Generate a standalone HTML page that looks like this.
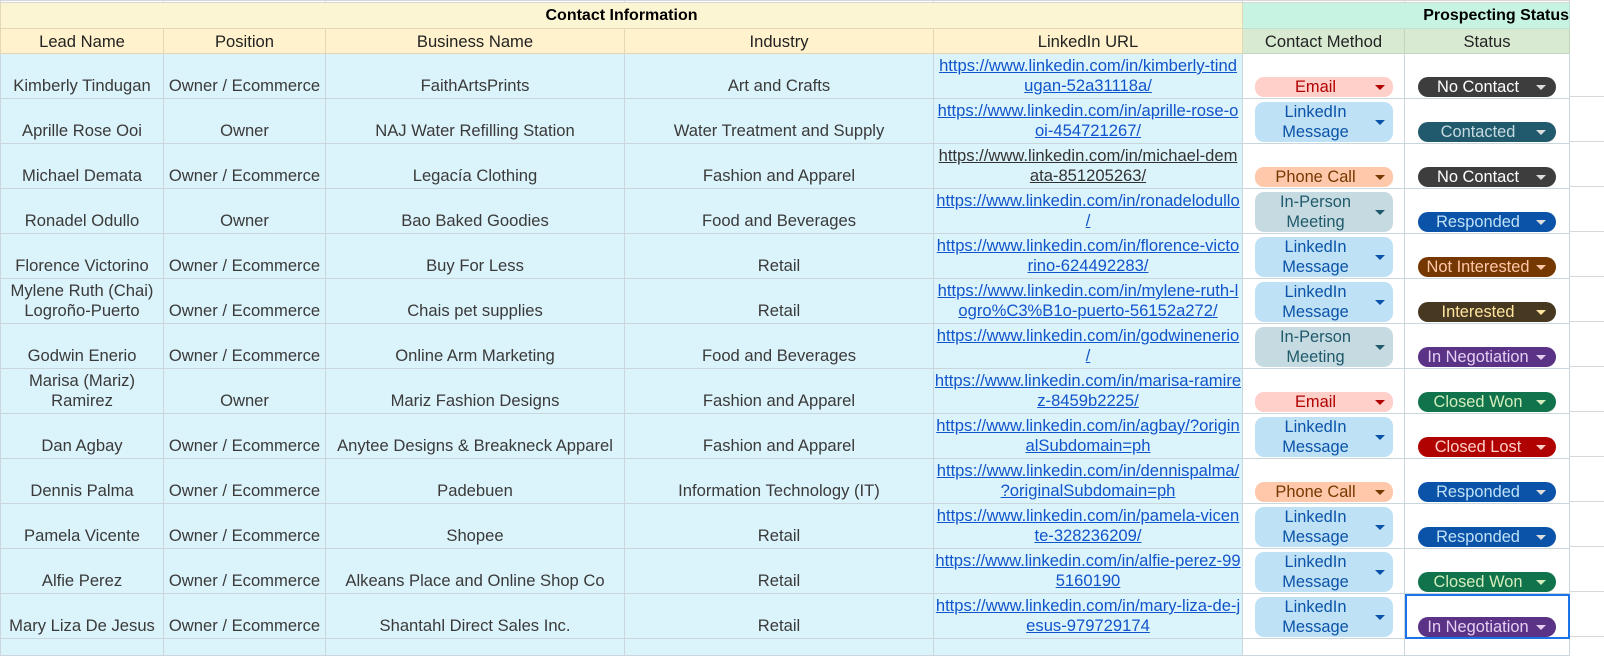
<!DOCTYPE html>
<html><head><meta charset="utf-8"><style>
body{margin:0;width:1604px;height:655px;overflow:hidden;background:#fff;font-family:"Liberation Sans",Arial,sans-serif;}
table{border-collapse:collapse;table-layout:fixed;position:absolute;left:0;top:0;width:1569px;}
td{border:1px solid #c9d6dc;padding:0 0 3px;text-align:center;vertical-align:bottom;font-size:16.6px;line-height:19.5px;color:#3a3a3a;overflow:hidden;white-space:nowrap;}
tr.r0 td{height:1px;padding:0;border-color:#d6d6d6;}
tr.h1 td{height:22px;font-weight:bold;color:#000;background:#fbf5d3;font-size:16px;padding:0 0 3px;border-color:#e2d9b4;}
tr.h1 td.ps{background:#c7f4e2;text-align:right;border-color:#bfe0d2;}
tr.h2 td{height:22px;background:#fff2cc;color:#222;padding:0 0 2px;border-color:#e2d9b4;}
tr.h2 td.g{background:#d9ead3;border-color:#c3d5bd;}
tr.d td{height:41px;background:#dbf3fa;}
tr.d td.w{background:#fff;padding:0 0 1px;}
tr.e td{height:16px;background:#dbf3fa;padding:0}
tr.e td.w{background:#fff}
a{color:#1155cc;text-decoration:underline;}
a.k{color:#333;}
.c{display:inline-block;position:relative;width:138px;border-radius:9px;text-align:center;box-sizing:border-box;padding-right:16px;font-size:16.4px;line-height:19.5px;vertical-align:bottom}
.c:after{content:"";position:absolute;right:8px;top:50%;margin-top:-2px;border-left:5px solid transparent;border-right:5px solid transparent;border-top:5px solid currentColor;}
.c.one{height:20px;line-height:20px}
.c.two{height:40px;padding-top:1px}
.em{background:#ffcfc9;color:#b10202}
.li{background:#bfe1f6;color:#0a53a8}
.ph{background:#ffc8aa;color:#753800}
.ip{background:#c6dbe1;color:#215a6c}
.s{display:inline-block;position:relative;width:138px;height:20px;line-height:20px;border-radius:10px;box-sizing:border-box;padding-right:18px;font-size:16.4px;}
.s:after{content:"";position:absolute;right:10px;top:8px;border-left:5px solid transparent;border-right:5px solid transparent;border-top:5px solid currentColor;}
.nc{background:#3d3d3d;color:#fff}.nc:after{border-top-color:#ddd}
.ct{background:#215a6c;color:#c6dbe1}.ct:after{border-top-color:#ddd}
.rs{background:#0a53a8;color:#bfe1f6}.rs:after{border-top-color:#ddd}
.ni{background:#753800;color:#ffc8aa}
.in{background:#473821;color:#ffe5a0}
.ng{background:#5a3286;color:#e6cff2}
.cw{background:#11734b;color:#d4edbc}
.cl{background:#b10202;color:#ffcfc9}
.sel{outline:2px solid #1a73e8;outline-offset:-2px}
.rest{position:absolute;left:1569px;top:52px;width:35px;height:603px;background:repeating-linear-gradient(to bottom,#fff 0,#fff 44px,#d8d8d8 44px,#d8d8d8 45px);}
</style></head><body>
<div class="rest"></div>
<table>
<colgroup><col style="width:163px"><col style="width:162px"><col style="width:299px"><col style="width:309px"><col style="width:309px"><col style="width:162px"><col style="width:165px"></colgroup>
<tr class="r0"><td></td><td></td><td></td><td></td><td></td><td></td><td></td></tr>
<tr class="h1"><td colspan="5" style="text-align:center">Contact Information</td><td colspan="2" class="ps">Prospecting Status</td></tr>
<tr class="h2"><td>Lead Name</td><td>Position</td><td>Business Name</td><td>Industry</td><td>LinkedIn URL</td><td class="g">Contact Method</td><td class="g">Status</td></tr>

<tr class="d"><td>Kimberly Tindugan</td><td>Owner / Ecommerce</td><td>FaithArtsPrints</td><td>Art and Crafts</td><td><a>https://www.linkedin.com/in/kimberly-tind<br>ugan-52a31118a/</a></td><td class="w"><span class="c one em">Email</span></td><td class="w"><span class="s nc">No Contact</span></td></tr>
<tr class="d"><td>Aprille Rose Ooi</td><td>Owner</td><td>NAJ Water Refilling Station</td><td>Water Treatment and Supply</td><td><a>https://www.linkedin.com/in/aprille-rose-o<br>oi-454721267/</a></td><td class="w"><span class="c two li">LinkedIn<br>Message</span></td><td class="w"><span class="s ct">Contacted</span></td></tr>
<tr class="d"><td>Michael Demata</td><td>Owner / Ecommerce</td><td>Legacía Clothing</td><td>Fashion and Apparel</td><td><a class="k">https://www.linkedin.com/in/michael-dem<br>ata-851205263/</a></td><td class="w"><span class="c one ph">Phone Call</span></td><td class="w"><span class="s nc">No Contact</span></td></tr>
<tr class="d"><td>Ronadel Odullo</td><td>Owner</td><td>Bao Baked Goodies</td><td>Food and Beverages</td><td><a>https://www.linkedin.com/in/ronadelodullo<br>/</a></td><td class="w"><span class="c two ip">In-Person<br>Meeting</span></td><td class="w"><span class="s rs">Responded</span></td></tr>
<tr class="d"><td>Florence Victorino</td><td>Owner / Ecommerce</td><td>Buy For Less</td><td>Retail</td><td><a>https://www.linkedin.com/in/florence-victo<br>rino-624492283/</a></td><td class="w"><span class="c two li">LinkedIn<br>Message</span></td><td class="w"><span class="s ni">Not Interested</span></td></tr>
<tr class="d"><td>Mylene Ruth (Chai)<br>Logroño-Puerto</td><td>Owner / Ecommerce</td><td>Chais pet supplies</td><td>Retail</td><td><a>https://www.linkedin.com/in/mylene-ruth-l<br>ogro%C3%B1o-puerto-56152a272/</a></td><td class="w"><span class="c two li">LinkedIn<br>Message</span></td><td class="w"><span class="s in">Interested</span></td></tr>
<tr class="d"><td>Godwin Enerio</td><td>Owner / Ecommerce</td><td>Online Arm Marketing</td><td>Food and Beverages</td><td><a>https://www.linkedin.com/in/godwinenerio<br>/</a></td><td class="w"><span class="c two ip">In-Person<br>Meeting</span></td><td class="w"><span class="s ng">In Negotiation</span></td></tr>
<tr class="d"><td>Marisa (Mariz)<br>Ramirez</td><td>Owner</td><td>Mariz Fashion Designs</td><td>Fashion and Apparel</td><td><a>https://www.linkedin.com/in/marisa-ramire<br>z-8459b2225/</a></td><td class="w"><span class="c one em">Email</span></td><td class="w"><span class="s cw">Closed Won</span></td></tr>
<tr class="d"><td>Dan Agbay</td><td>Owner / Ecommerce</td><td>Anytee Designs &amp; Breakneck Apparel</td><td>Fashion and Apparel</td><td><a>https://www.linkedin.com/in/agbay/?origin<br>alSubdomain=ph</a></td><td class="w"><span class="c two li">LinkedIn<br>Message</span></td><td class="w"><span class="s cl">Closed Lost</span></td></tr>
<tr class="d"><td>Dennis Palma</td><td>Owner / Ecommerce</td><td>Padebuen</td><td>Information Technology (IT)</td><td><a>https://www.linkedin.com/in/dennispalma/<br>?originalSubdomain=ph</a></td><td class="w"><span class="c one ph">Phone Call</span></td><td class="w"><span class="s rs">Responded</span></td></tr>
<tr class="d"><td>Pamela Vicente</td><td>Owner / Ecommerce</td><td>Shopee</td><td>Retail</td><td><a>https://www.linkedin.com/in/pamela-vicen<br>te-328236209/</a></td><td class="w"><span class="c two li">LinkedIn<br>Message</span></td><td class="w"><span class="s rs">Responded</span></td></tr>
<tr class="d"><td>Alfie Perez</td><td>Owner / Ecommerce</td><td>Alkeans Place and Online Shop Co</td><td>Retail</td><td><a>https://www.linkedin.com/in/alfie-perez-99<br>5160190</a></td><td class="w"><span class="c two li">LinkedIn<br>Message</span></td><td class="w"><span class="s cw">Closed Won</span></td></tr>
<tr class="d"><td>Mary Liza De Jesus</td><td>Owner / Ecommerce</td><td>Shantahl Direct Sales Inc.</td><td>Retail</td><td><a>https://www.linkedin.com/in/mary-liza-de-j<br>esus-979729174</a></td><td class="w"><span class="c two li">LinkedIn<br>Message</span></td><td class="w sel"><span class="s ng">In Negotiation</span></td></tr>
<tr class="e"><td></td><td></td><td></td><td></td><td></td><td class="w"></td><td class="w"></td></tr>
</table>
</body></html>
